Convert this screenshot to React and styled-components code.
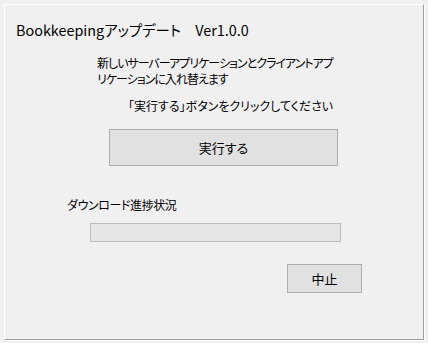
import React from "react";
import styled, { createGlobalStyle } from "styled-components";

const Global = createGlobalStyle`
  html, body { margin: 0; padding: 0; background: #f0f0f0; }
  body { font-family: "Noto Sans CJK JP", "Noto Sans", sans-serif; color: #000; }
`;

const Page = styled.div`
  width: 428px;
  height: 343px;
  padding: 4px 4px 3px 4px;
  box-sizing: border-box;
`;

const Frame = styled.div`
  width: 420px;
  height: 336px;
  box-sizing: border-box;
  border-top: 1px solid #ffffff;
  border-left: 1px solid #ffffff;
  border-right: 1px solid #a0a0a0;
  border-bottom: 1px solid #a0a0a0;
  box-shadow: 1px 1px 0 #ffffff;
  display: flex;
  flex-direction: column;
  align-items: flex-start;
  font-feature-settings: "palt";
`;

const Title = styled.div`
  margin: 15px 0 0 11px;
  font-size: 14.4px;
  line-height: 20px;
  white-space: nowrap;
`;

const Message = styled.div`
  margin: 15px 0 0 92px;
  font-size: 12px;
  line-height: 16px;
  letter-spacing: -1px;
`;

const Line = styled.div`
  white-space: nowrap;
`;

const Hint = styled.div`
  margin: 11px 0 0 123px;
  font-size: 12px;
  line-height: 16px;
  white-space: nowrap;
`;

const Button = styled.button`
  margin: ${(p) => p.$mt}px 0 0 ${(p) => p.$ml}px;
  width: ${(p) => p.$w}px;
  height: ${(p) => p.$h}px;
  box-sizing: border-box;
  background: #e1e1e1;
  border: 1px solid #adadad;
  font-family: inherit;
  font-size: 13px;
  color: #000;
  padding: 0;
  font-feature-settings: "palt";
`;

const Label = styled.div`
  margin: 31px 0 0 62px;
  font-size: 12px;
  line-height: 16px;
  white-space: nowrap;
  letter-spacing: -0.4px;
`;

const Progress = styled.div`
  margin: 10px 0 0 85px;
  width: 251px;
  height: 19px;
  box-sizing: border-box;
  background: #e6e6e6;
  border: 1px solid #bcbcbc;
`;

export default function App() {
  return (
    <>
      <Global />
      <Page>
        <Frame>
          <Title>Bookkeepingアップデート　Ver1.0.0</Title>
          <Message>
            <Line>新しいサーバーアプリケーションとクライアントアプ</Line>
            <Line>リケーションに入れ替えます</Line>
          </Message>
          <Hint>「実行する」ボタンをクリックしてください</Hint>
          <Button $mt={15} $ml={104} $w={229} $h={37}>実行する</Button>
          <Label>ダウンロード進捗状況</Label>
          <Progress />
          <Button $mt={22} $ml={282} $w={75} $h={29}>中止</Button>
        </Frame>
      </Page>
    </>
  );
}
